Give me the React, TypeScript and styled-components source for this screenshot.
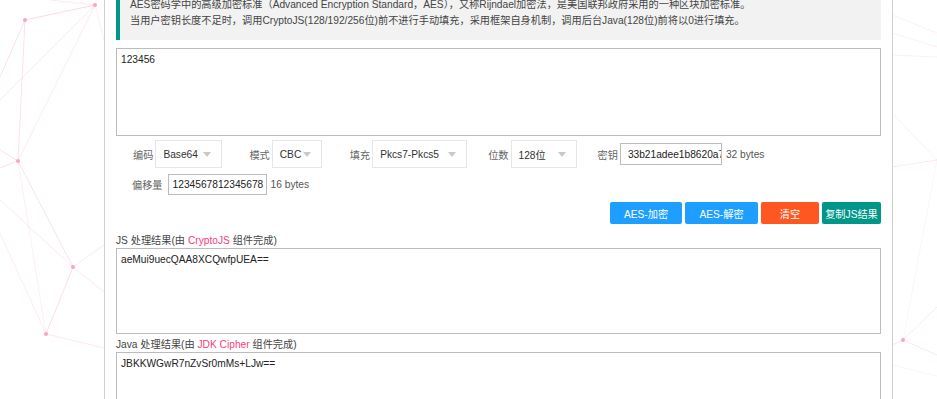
import React from "react";
import styled, { createGlobalStyle } from "styled-components";

const GlobalStyle = createGlobalStyle`
  html, body {
    margin: 0;
    padding: 0;
    background: #fff;
  }
  body {
    font-family: "Liberation Sans", "Noto Sans CJK SC", sans-serif;
    font-size: 10.2px;
    color: #333;
    overflow: hidden;
  }
`;

const Page = styled.div`
  position: relative;
  width: 937px;
  height: 399px;
  overflow: hidden;
`;

const Backdrop = styled.svg`
  position: absolute;
  left: 0;
  top: 0;
  width: 937px;
  height: 399px;
`;

const Panel = styled.main`
  position: relative;
  margin: -10px 0 0 104px;
  width: 765px;
  min-height: 430px;
  padding: 0 11px;
  background: #fff;
  border-left: 1px solid #cfcfcf;
  border-right: 1px solid #cfcfcf;
  display: flex;
  flex-direction: column;
`;

const Quote = styled.blockquote`
  margin: 0;
  padding: 7px 10px 11px 10px;
  border-left: 4px solid #009688;
  background: #f2f2f2;
  line-height: 16px;
  color: #444;
  white-space: nowrap;
`;

const TextBox = styled.textarea<{ $height: number; $top: number }>`
  box-sizing: border-box;
  display: block;
  width: 100%;
  height: ${(p) => p.$height}px;
  margin-top: ${(p) => p.$top}px;
  padding: 4px 4px;
  border: 1px solid #bcbcbc;
  border-radius: 0;
  resize: none;
  outline: none;
  font-family: inherit;
  font-size: 10.2px;
  line-height: 14px;
  color: #222;
  background: #fff;
`;

const OptionRow = styled.div<{ $top: number; $height: number }>`
  display: flex;
  align-items: center;
  height: ${(p) => p.$height}px;
  margin-top: ${(p) => p.$top}px;
`;

const Field = styled.div<{ $offset: number }>`
  display: flex;
  align-items: center;
  margin-left: ${(p) => p.$offset}px;
`;

const Label = styled.span<{ $gap?: number }>`
  color: #666;
  margin-right: ${(p) => p.$gap ?? 2}px;
  white-space: nowrap;
`;

const Select = styled.div<{ $width: number }>`
  box-sizing: border-box;
  width: ${(p) => p.$width}px;
  height: 28px;
  padding: 0 10px 0 7px;
  border: 1px solid #e6e6e6;
  background: #fff;
  display: flex;
  align-items: center;
  justify-content: space-between;
  color: #333;
`;

const Caret = styled.i`
  width: 0;
  height: 0;
  border-left: 4px solid transparent;
  border-right: 4px solid transparent;
  border-top: 5px solid #c9c9c9;
`;

const TextInput = styled.input<{ $width: number; $height: number; $pad: number }>`
  box-sizing: border-box;
  width: ${(p) => p.$width}px;
  height: ${(p) => p.$height}px;
  padding: 0 0 0 ${(p) => p.$pad}px;
  border: 1px solid #bcbcbc;
  border-radius: 0;
  outline: none;
  font-family: inherit;
  font-size: 10.2px;
  color: #222;
`;

const Unit = styled.span`
  margin-left: 4px;
  color: #555;
`;

const ButtonBar = styled.div`
  display: flex;
  justify-content: flex-end;
  gap: 3px;
  margin-top: 7px;
`;

const Button = styled.button<{ $bg: string; $width: number }>`
  width: ${(p) => p.$width}px;
  height: 22px;
  padding: 0;
  border: none;
  border-radius: 2px;
  background: ${(p) => p.$bg};
  color: #fff;
  font-family: inherit;
  font-size: 10.2px;
`;

const ResultLabel = styled.div<{ $top: number }>`
  margin-top: ${(p) => p.$top}px;
  line-height: 14px;
  color: #444;
`;

const Accent = styled.span`
  color: #f5417a;
`;

const nodes: [number, number][] = [
  [95, 5],
  [25, 20],
  [18, 161],
  [73, 267],
  [46, 334],
  [903, 340],
];

const edges: [number, number, number, number, number][] = [
  [25, 20, 95, 5, 0.25],
  [50, 0, 95, 5, 0.15],
  [25, 20, 18, 161, 0.2],
  [25, 20, 0, 77, 0.2],
  [95, 5, 0, 100, 0.15],
  [95, 5, 18, 161, 0.15],
  [95, 5, 104, 40, 0.1],
  [0, 150, 18, 161, 0.2],
  [0, 168, 18, 161, 0.2],
  [18, 161, 73, 267, 0.2],
  [18, 161, 46, 334, 0.1],
  [0, 200, 73, 267, 0.15],
  [0, 233, 46, 334, 0.12],
  [73, 267, 104, 245, 0.15],
  [73, 267, 104, 292, 0.15],
  [73, 267, 46, 334, 0.22],
  [46, 334, 104, 348, 0.15],
  [892, 15, 937, 33, 0.1],
  [892, 33, 937, 47, 0.1],
  [892, 55, 937, 57, 0.1],
  [892, 113, 937, 160, 0.1],
  [892, 167, 937, 160, 0.14],
  [903, 340, 937, 307, 0.14],
  [903, 340, 892, 345, 0.16],
  [903, 340, 937, 355, 0.16],
  [903, 340, 937, 160, 0.07],
  [892, 365, 937, 376, 0.08],
];

const Network = () => (
  <Backdrop viewBox="0 0 937 399">
    {edges.map(([x1, y1, x2, y2, o], i) => (
      <line
        key={i}
        x1={x1}
        y1={y1}
        x2={x2}
        y2={y2}
        stroke="#f06292"
        strokeOpacity={o}
        strokeWidth={1}
      />
    ))}
    {nodes.map(([cx, cy], i) => (
      <circle key={i} cx={cx} cy={cy} r={2} fill="#f8a5c0" />
    ))}
  </Backdrop>
);

const App = () => {
  return (
    <>
      <GlobalStyle />
      <Page>
        <Network />
        <Panel>
          <Quote>
            AES密码学中的高级加密标准（Advanced Encryption Standard，AES），又称Rijndael加密法，是美国联邦政府采用的一种区块加密标准。
            <br />
            当用户密钥长度不足时，调用CryptoJS(128/192/256位)前不进行手动填充，采用框架自身机制，调用后台Java(128位)前将以0进行填充。
          </Quote>

          <TextBox $height={88} $top={8} readOnly value="123456" />

          <OptionRow $top={4} $height={28}>
            <Field $offset={17}>
              <Label>编码</Label>
              <Select $width={67}>
                Base64
                <Caret />
              </Select>
            </Field>
            <Field $offset={27}>
              <Label>模式</Label>
              <Select $width={50}>
                CBC
                <Caret />
              </Select>
            </Field>
            <Field $offset={28}>
              <Label>填充</Label>
              <Select $width={95}>
                Pkcs7-Pkcs5
                <Caret />
              </Select>
            </Field>
            <Field $offset={21}>
              <Label>位数</Label>
              <Select $width={66}>
                128位
                <Caret />
              </Select>
            </Field>
            <Field $offset={21}>
              <Label>密钥</Label>
              <TextInput
                $width={102}
                $height={22}
                $pad={7}
                readOnly
                value="33b21adee1b8620a7f3e5c9d0a4b6e21"
              />
              <Unit>32 bytes</Unit>
            </Field>
          </OptionRow>

          <OptionRow $top={6} $height={21}>
            <Field $offset={16}>
              <Label $gap={5}>偏移量</Label>
              <TextInput $width={99} $height={21} $pad={4} readOnly value="1234567812345678" />
              <Unit>16 bytes</Unit>
            </Field>
          </OptionRow>

          <ButtonBar>
            <Button $bg="#1e9fff" $width={72}>AES-加密</Button>
            <Button $bg="#1e9fff" $width={73}>AES-解密</Button>
            <Button $bg="#ff5722" $width={58}>清空</Button>
            <Button $bg="#009688" $width={59}>复制JS结果</Button>
          </ButtonBar>

          <ResultLabel $top={10}>
            JS 处理结果(由 <Accent>CryptoJS</Accent> 组件完成)
          </ResultLabel>
          <TextBox $height={86} $top={0} readOnly value="aeMui9uecQAA8XCQwfpUEA==" />

          <ResultLabel $top={4}>
            Java 处理结果(由 <Accent>JDK Cipher</Accent> 组件完成)
          </ResultLabel>
          <TextBox $height={86} $top={0} readOnly value="JBKKWGwR7nZvSr0mMs+LJw==" />
        </Panel>
      </Page>
    </>
  );
};

export default App;
